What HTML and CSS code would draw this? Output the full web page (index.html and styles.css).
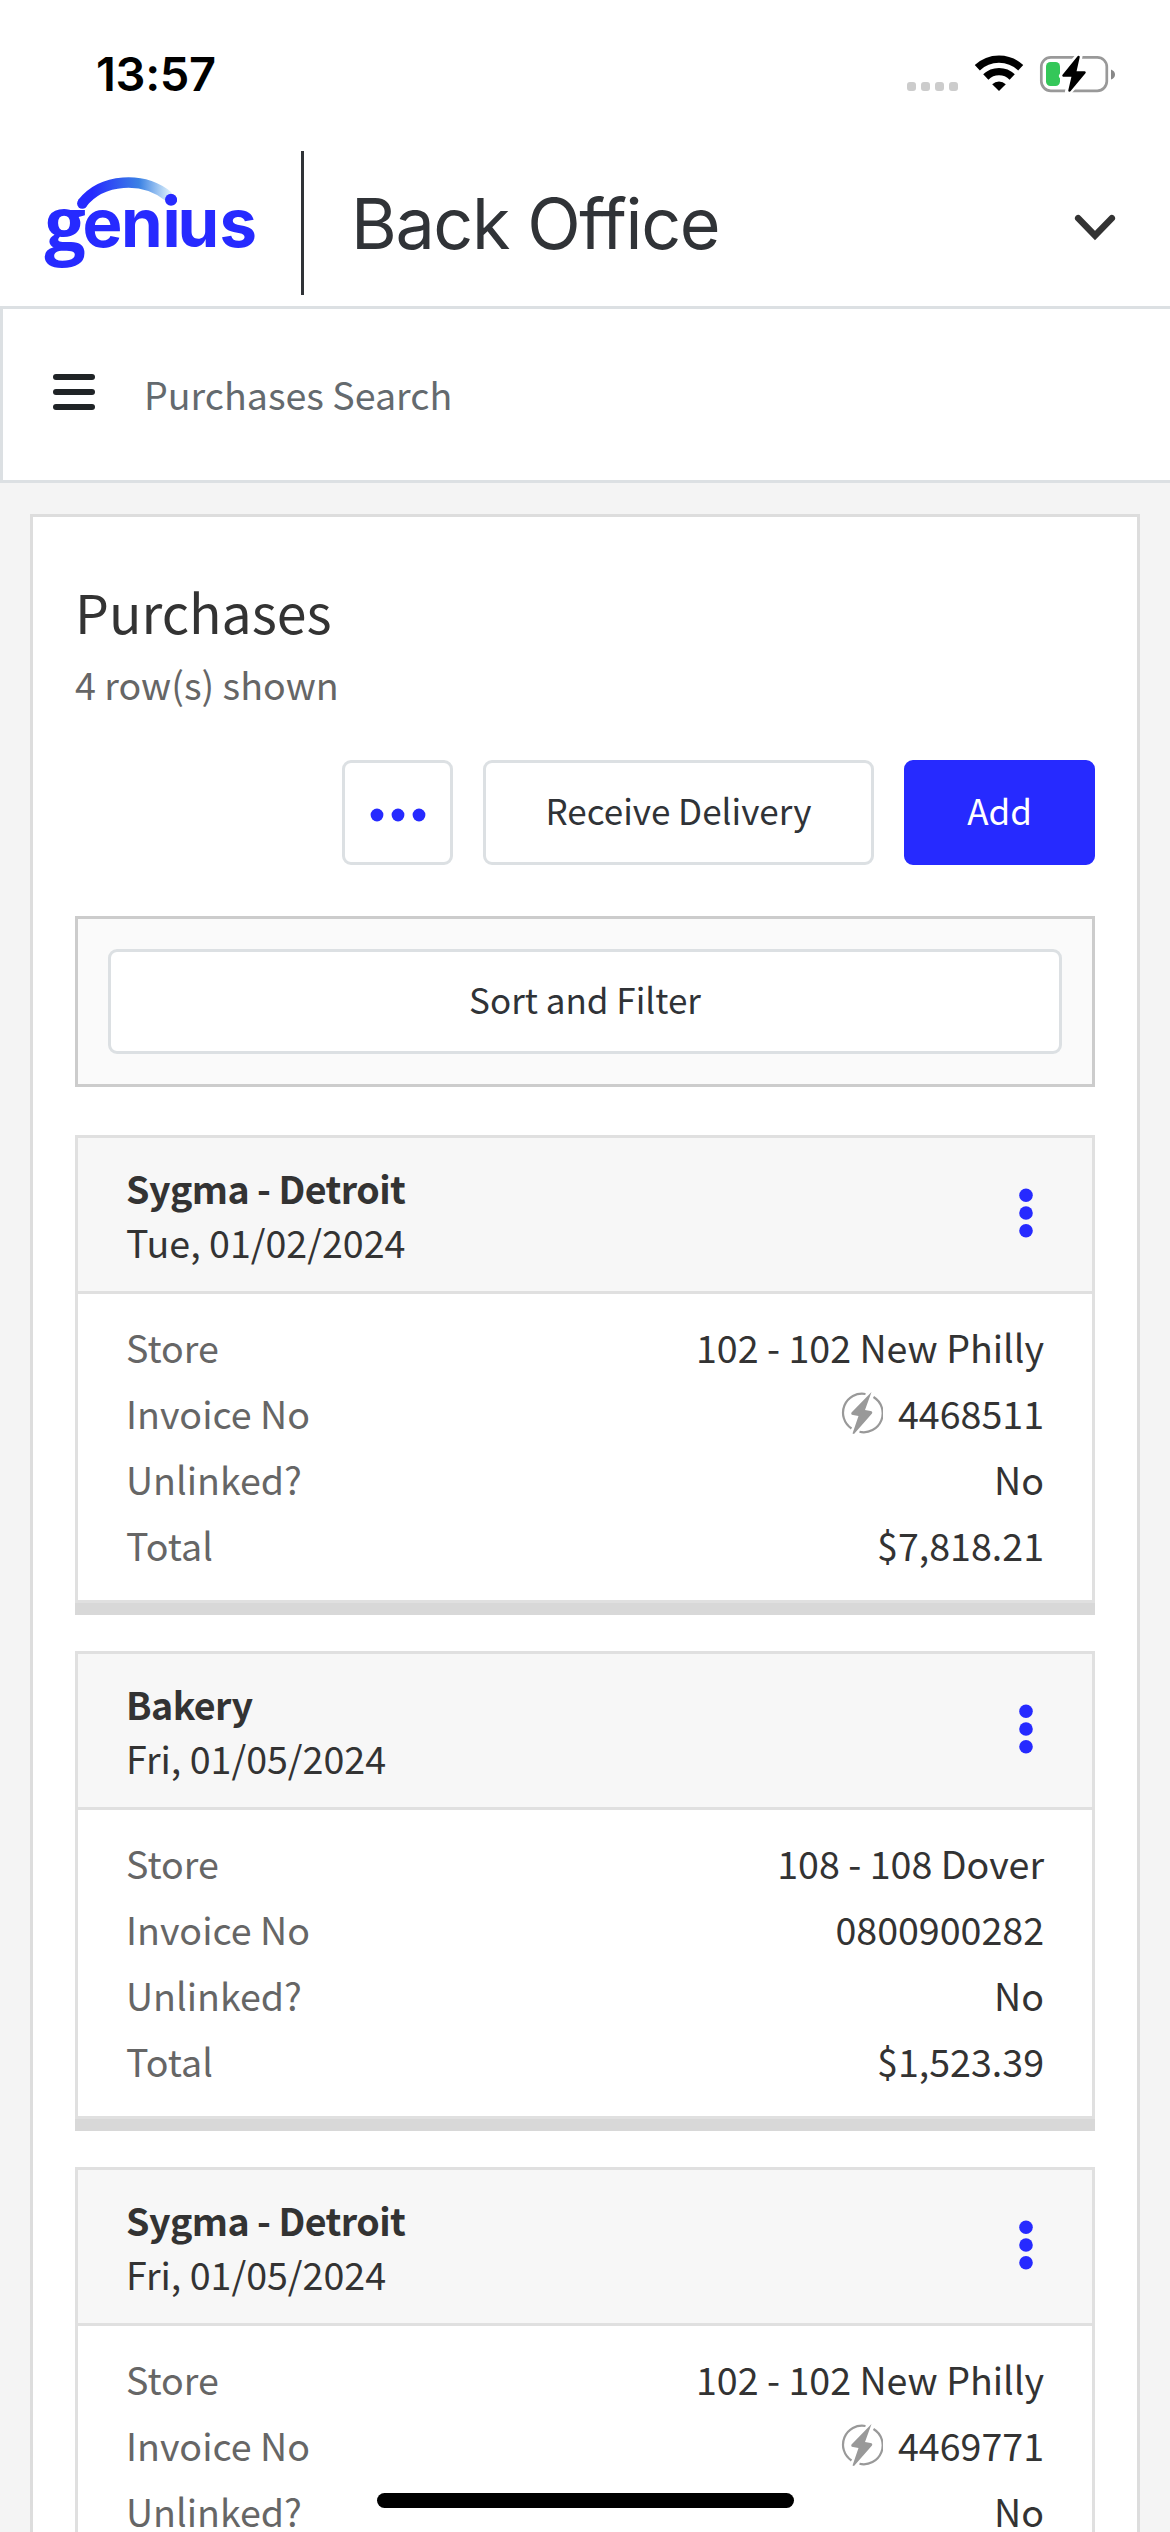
FILE: index.html
```html
<!DOCTYPE html>
<html lang="en">
<head>
<meta charset="utf-8">
<title>Back Office - Purchases</title>
<link rel="stylesheet" href="styles.css">
</head>
<body>
<svg class="defs" width="0" height="0" aria-hidden="true">
  <symbol id="more" viewBox="0 0 14 50"><circle cx="7" cy="7.2" r="6.8"/><circle cx="7" cy="25" r="6.8"/><circle cx="7" cy="42.8" r="6.8"/></symbol>
  <symbol id="bolt" viewBox="0 0 42 44">
    <path d="M24.5 3A19 19 0 0 0 10.5 37.5M18.5 40.8A19 19 0 0 0 32.5 6" fill="none" stroke="currentColor" stroke-width="2.2"/>
    <path d="M30.5 1 L10.5 21.5Q9.5 23.500 12 24L17.500 25 11.500 42.500 13 43 31 22.500Q32 20.500 29.500 20L24 19Z" fill="currentColor"/>
  </symbol>
</svg>
<div class="screen">
  <div class="status">
    <span class="time">13:57</span>
    <svg class="status-icons" width="210" height="38" viewBox="906 55 210 38">
      <g fill="#ccc"><rect x="907" y="82" width="9" height="9" rx="3"/><rect x="921" y="82" width="9" height="9" rx="3"/><rect x="935" y="82" width="9" height="9" rx="3"/><rect x="949" y="82" width="9" height="9" rx="3"/></g>
      <g fill="none" stroke="#000" stroke-width="7.4"><path d="M977.3 67.8A31.5 31.5 0 0 1 1020.7 67.8"/><path d="M985.8 77A18.8 18.8 0 0 1 1012.2 77"/></g>
      <path d="M999 91L992.2 84.2A10 10 0 0 1 1005.8 84.2Z"/>
      <rect x="1041.3" y="57.3" width="65.5" height="33.5" rx="9.5" fill="none" stroke="#999" stroke-width="2.7"/>
      <path d="M1111 69.5V79.5Q1115 78 1115 74.5T1111 69.5Z" fill="#888"/>
      <rect x="1046" y="62" width="14" height="24" rx="4.5" fill="#34c759"/>
      <path d="M1079 56L1062.5 76H1072L1068.5 91.5 1085.5 72H1076Z" stroke="#fff" stroke-width="7" stroke-linejoin="round"/>
      <path d="M1078.5 57L1063.5 75.5H1073L1069.5 90.5 1084.5 72.5H1075Z" stroke="#000" stroke-width="2.5" stroke-linejoin="round"/>
    </svg>
  </div>
  <header class="brand">
    <svg class="logo" width="220" height="110" viewBox="40 165 220 110">
      <defs><linearGradient id="arc" x1="78" x2="172" y1="0" y2="0" gradientUnits="userSpaceOnUse"><stop offset=".15" stop-color="#262aff"/><stop offset=".65" stop-color="#3b82e4"/><stop offset="1" stop-color="#e6f6fb"/></linearGradient></defs>
      <path d="M82 203.500C102 178 143 176 168.500 196.500" fill="none" stroke="url(#arc)" stroke-width="10.500"/>
      <circle cx="82.300" cy="203.500" r="5.200" fill="#262aff"/>
      <text y="247" fill="#262aff"><tspan class="logo-g" x="44.500" y="250">g</tspan><tspan class="logo-rest" x="82.500 121 162.500 177.500 219.500" y="247">enius</tspan></text>
      <circle cx="171" cy="199.700" r="6" fill="#262aff"/>
    </svg>
    <span class="divider"></span>
    <h1>Back Office</h1>
    <svg class="chevron" width="42" height="28" viewBox="1074 214 42 28"><path d="M1078.200 218.200L1095 235.500 1111.800 218.200" fill="none" stroke="#333" stroke-width="6.500" stroke-linecap="round"/></svg>
  </header>
  <nav class="toolbar">
    <span class="burger"><i></i><i></i><i></i></span>
    <span class="crumb">Purchases Search</span>
  </nav>
  <main class="panel">
    <h2>Purchases</h2>
    <p class="count">4 row(s) shown</p>
    <div class="actions">
      <button class="btn dots"><svg width="56" height="14" viewBox="0 0 56 14" fill="#262aff"><circle cx="7" cy="7" r="6.400"/><circle cx="28" cy="7" r="6.400"/><circle cx="49" cy="7" r="6.400"/></svg></button>
      <button class="btn receive">Receive Delivery</button>
      <button class="btn primary">Add</button>
    </div>
    <div class="filter"><button class="btn">Sort and Filter</button></div>

    <section class="card">
      <div class="card-head"><div><strong>Sygma - Detroit</strong><span>Tue, 01/02/2024</span></div><svg class="more"><use href="#more"/></svg></div>
      <dl>
        <div><dt>Store</dt><dd>102 - 102 New Philly</dd></div>
        <div><dt>Invoice No</dt><dd><svg class="bolt"><use href="#bolt"/></svg>4468511</dd></div>
        <div><dt>Unlinked?</dt><dd>No</dd></div>
        <div><dt>Total</dt><dd>$7,818.21</dd></div>
      </dl>
    </section>
    <section class="card">
      <div class="card-head"><div><strong>Bakery</strong><span>Fri, 01/05/2024</span></div><svg class="more"><use href="#more"/></svg></div>
      <dl>
        <div><dt>Store</dt><dd>108 - 108 Dover</dd></div>
        <div><dt>Invoice No</dt><dd>0800900282</dd></div>
        <div><dt>Unlinked?</dt><dd>No</dd></div>
        <div><dt>Total</dt><dd>$1,523.39</dd></div>
      </dl>
    </section>
    <section class="card">
      <div class="card-head"><div><strong>Sygma - Detroit</strong><span>Fri, 01/05/2024</span></div><svg class="more"><use href="#more"/></svg></div>
      <dl>
        <div><dt>Store</dt><dd>102 - 102 New Philly</dd></div>
        <div><dt>Invoice No</dt><dd><svg class="bolt"><use href="#bolt"/></svg>4469771</dd></div>
        <div><dt>Unlinked?</dt><dd>No</dd></div>
      </dl>
    </section>
  </main>
  <div class="home-indicator"></div>
</div>
</body>
</html>
```

FILE: styles.css
```css
* { box-sizing: border-box; margin: 0; padding: 0; }
body { background: #f4f4f4; }
.defs { position: absolute; }
.screen {
  position: relative;
  width: 1170px;
  height: 2532px;
  overflow: hidden;
  background: #f4f4f4;
  color: #333;
  font: 400 37.6px/66px "Noto Sans CJK JP", "Noto Sans CJK SC", sans-serif;
}
.status {
  height: 141px;
  padding: 0 54px 0 96px;
  background: #fff;
  display: flex;
  justify-content: space-between;
}
.time { margin-top: 41px; font: 600 47px/66px Inter, sans-serif; color: #000; letter-spacing: -0.3px; }
.status-icons { margin-top: 55px; }
.brand {
  height: 165px;
  padding: 10px 54px 0 40px;
  background: #fff;
  display: flex;
  align-items: flex-start;
}
.logo { margin-top: 14px; }
.logo-g { font: 700 73px "Open Sans", sans-serif; }
.logo-rest { font: 700 67px Inter, sans-serif; }
.divider { width: 3px; height: 144px; margin-left: 41px; background: #303337; }
h1 {
  flex: 1;
  margin: 23px 0 0 47px;
  font: 400 70px/100px Inter, sans-serif;
  letter-spacing: -1.4px;
  color: #303337;
}
.chevron { margin-top: 63px; }
.toolbar {
  height: 177px;
  border: 3px solid #dce0e3;
  border-right: 0;
  background: #fff;
  padding-left: 50px;
  display: flex;
}
.burger { width: 42px; margin: 65px 49px 0 0; display: flex; flex-direction: column; gap: 9px; }
.burger i { height: 6px; border-radius: 3px; background: #1f2326; }
.crumb { margin-top: 52px; color: #646a6e; }
.panel {
  width: 1110px;
  height: 2100px;
  margin: 31px 0 0 30px;
  padding: 55px 42px 0;
  border: 3px solid #ddd;
  background: #fff;
}
h2 { font-size: 53.6px; line-height: 78px; font-weight: 400; }
.count { color: #666; line-height: 54px; margin-top: 7px; height: 54px; }
.actions { margin-top: 49px; display: flex; justify-content: flex-end; gap: 30px; }
.btn {
  height: 105px;
  border: 3px solid #dce0e3;
  border-radius: 9px;
  background: #fff;
  color: #303337;
  font: inherit;
  font-size: 35px;
  line-height: 94px;
  padding-bottom: 5px;
}
.dots { width: 111px; display: flex; justify-content: center; align-items: flex-start; padding: 45px 0 0; }
.dots svg { flex: none; }
.receive { width: 391px; }
.primary { width: 191px; border-color: #262aff; background: #262aff; color: #fff; }
.filter { height: 171px; margin: 51px 0 48px; padding: 30px; border: 3px solid #ccc; background: #fafafa; }
.filter .btn { display: block; width: 100%; }
.card {
  height: 468px;
  margin-bottom: 48px;
  border: 3px solid #e0e0e0;
  box-shadow: 0 12px 0 #d8d8d8;
}
.card-head {
  height: 156px;
  padding: 23px 59px 0 48px;
  border-bottom: 3px solid #e0e0e0;
  background: #f7f7f7;
  display: flex;
  justify-content: space-between;
  line-height: 54px;
}
.card-head strong, .card-head span { display: block; }
.card-head strong { font-weight: 700; letter-spacing: -0.55px; }
.more { width: 14px; height: 50px; margin-top: 27px; fill: #262aff; }
dl { padding: 20px 48px 0; }
dl div { display: flex; justify-content: space-between; }
dt { color: #666; }
dd { display: flex; align-items: center; }
.bolt { width: 42px; height: 44px; margin-right: 15px; color: #999; }
.home-indicator {
  position: absolute;
  left: 377px;
  top: 2493px;
  width: 417px;
  height: 15px;
  border-radius: 8px;
  background: #000;
}
```
